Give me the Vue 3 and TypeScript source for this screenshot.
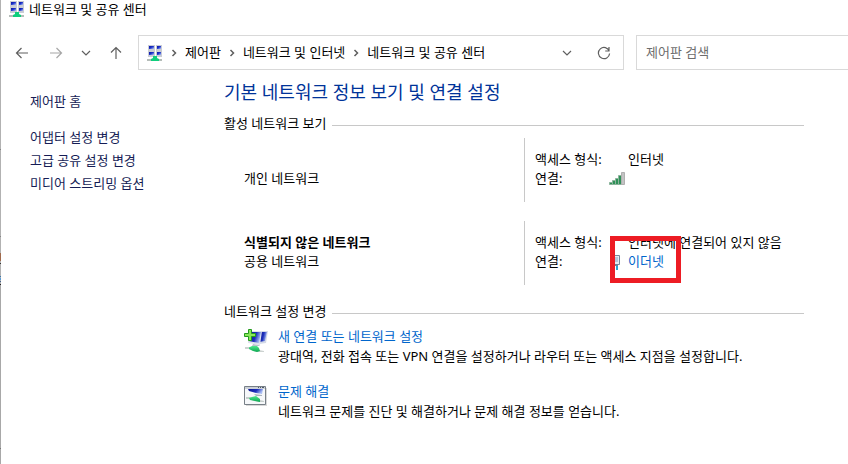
<script setup lang="ts">
interface Network {
  name: string
  type: string
  access: string
  link: string
  highlighted: boolean
}

const crumbs: string[] = ['제어판', '네트워크 및 인터넷', '네트워크 및 공유 센터']
const sideLinks: string[] = ['어댑터 설정 변경', '고급 공유 설정 변경', '미디어 스트리밍 옵션']

const networks: Network[] = [
  { name: '', type: '개인 네트워크', access: '인터넷', link: '', highlighted: false },
  {
    name: '식별되지 않은 네트워크',
    type: '공용 네트워크',
    access: '인터넷에 연결되어 있지 않음',
    link: '이더넷',
    highlighted: true,
  },
]
</script>

<template>
  <div class="window">
    <svg class="defs" width="0" height="0" aria-hidden="true">
      <defs>
        <linearGradient id="screen" x1="0" y1="0" x2="1" y2="1">
          <stop offset="0" stop-color="#0a12a0" />
          <stop offset="0.45" stop-color="#1b30c8" />
          <stop offset="1" stop-color="#b9cdf8" />
        </linearGradient>
        <linearGradient id="display" x1="0" y1="0" x2="1" y2="0.3">
          <stop offset="0" stop-color="#0c1590" />
          <stop offset="0.6" stop-color="#1c2fbb" />
          <stop offset="1" stop-color="#a9bdf4" />
        </linearGradient>
        <linearGradient id="plug" x1="0" y1="0" x2="0" y2="1">
          <stop offset="0" stop-color="#4fe88c" />
          <stop offset="1" stop-color="#0ba651" />
        </linearGradient>
        <symbol id="net" viewBox="0 0 16 16">
          <g fill="#c9ccd4">
            <rect x="1" y="0" width="7" height="6" />
            <rect x="9" y="0" width="6" height="6" />
            <rect x="1" y="6" width="7" height="6" />
            <rect x="9" y="6" width="6" height="6" />
          </g>
          <g fill="url(#screen)">
            <rect x="2" y="1" width="5" height="3" />
            <rect x="10" y="1" width="4" height="3" />
            <rect x="2" y="7" width="5" height="3" />
            <rect x="10" y="7" width="4" height="3" />
          </g>
          <path d="M0 14h15v2H0z" fill="#b4bcb8" />
          <path d="M6 11h4v2l2 1v2H4v-2l2-1z" fill="#0fce7c" />
        </symbol>
      </defs>
    </svg>

    <header class="titlebar">
      <svg class="icon16" aria-hidden="true"><use href="#net" /></svg>
      <span>네트워크 및 공유 센터</span>
    </header>

    <div class="toolbar">
      <nav class="history">
        <button type="button" aria-label="뒤로">
          <svg width="14" height="14" viewBox="0 0 14 14"><path d="M13 7H1.500M6.500 2L1.500 7l5 5" /></svg>
        </button>
        <button type="button" class="off" aria-label="앞으로">
          <svg width="14" height="14" viewBox="0 0 14 14"><path d="M1 7h11.500M7.500 2l5 5-5 5" /></svg>
        </button>
        <button type="button" class="small" aria-label="최근 위치">
          <svg width="10" height="10" viewBox="0 0 10 10"><path d="M1 3l4 4 4-4" /></svg>
        </button>
        <button type="button" aria-label="위로">
          <svg width="14" height="14" viewBox="0 0 14 14"><path d="M7 13V1.500M2 6.500l5-5 5 5" /></svg>
        </button>
      </nav>

      <div class="address">
        <svg class="icon16" aria-hidden="true"><use href="#net" /></svg>
        <template v-for="crumb in crumbs" :key="crumb">
          <svg class="sep" width="6" height="8" viewBox="0 0 6 8" aria-hidden="true"><path d="M1.500 1l3 3-3 3" /></svg>
          <a href="#">{{ crumb }}</a>
        </template>
        <span class="spacer"></span>
        <button type="button" aria-label="이전 위치">
          <svg width="10" height="10" viewBox="0 0 10 10"><path d="M1 3l4 4 4-4" /></svg>
        </button>
        <button type="button" aria-label="새로 고침">
          <svg width="14" height="14" viewBox="0 0 14 14"><path d="M12.300 5.200A5.600 5.600 0 1 0 12.600 7.500M12 1v4H8.200" /></svg>
        </button>
      </div>

      <input class="search" type="search" placeholder="제어판 검색" aria-label="제어판 검색" />
    </div>

    <div class="body">
      <aside class="side">
        <a class="home" href="#">제어판 홈</a>
        <a v-for="item in sideLinks" :key="item" href="#">{{ item }}</a>
      </aside>

      <main class="main">
        <h1>기본 네트워크 정보 보기 및 연결 설정</h1>

        <h2>활성 네트워크 보기</h2>
        <section v-for="net in networks" :key="net.type" class="network">
          <div class="identity">
            <strong v-if="net.name">{{ net.name }}</strong>
            <span>{{ net.type }}</span>
          </div>
          <dl class="details">
            <dt>액세스 형식:</dt>
            <dd class="value">{{ net.access }}</dd>
            <dt>연결:</dt>
            <dd class="connection">
              <svg v-if="net.highlighted" class="icon16" viewBox="0 0 16 16" aria-hidden="true">
                <path d="M3.500 1.500h7v9h-7z" fill="#e4ebf2" stroke="#75899d" />
                <path d="M5 3h4v5H5z" fill="#b5c7da" />
                <path d="M5 10h4v2H5z" fill="#6d8298" />
                <path d="M7 12h2v4H7z" fill="#27a5d2" />
              </svg>
              <svg v-else class="icon16" viewBox="0 0 16 16" aria-hidden="true">
                <g fill="#2f9158" stroke="#8db49c">
                  <path d="M.5 11.500h3v2h-3z" />
                  <path d="M3.500 9.500h3v4h-3z" />
                  <path d="M6.500 7.500h3v6h-3z" />
                  <path d="M9.500 4.500h3v9h-3z" />
                  <path d="M12.500 1.500h3v12h-3z" fill="#c3c3c3" stroke="#b0b0b0" />
                </g>
              </svg>
              <a v-if="net.link" href="#">{{ net.link }}</a>
            </dd>
          </dl>
          <span v-if="net.highlighted" class="marker"></span>
        </section>

        <h2 class="change">네트워크 설정 변경</h2>
        <section class="task">
          <svg width="24" height="24" viewBox="0 0 24 24" aria-hidden="true">
            <path d="M14 2l10 0-2 12-7 1z" fill="#d3d9e6" />
            <path d="M15 3l8 0-2 9-6 1z" fill="url(#display)" />
            <path d="M4 2l14 0-2 14-12-2z" fill="#dde2ec" />
            <path d="M5 3l12 0-2 11-10-2z" fill="url(#display)" />
            <path d="M9 15l6 1 1 1H8z" fill="#bac2cc" />
            <path d="M1 18h5l3 1 6 2 5 1v1l-5 0-5-1-4-2H1z" fill="#ccd2d0" />
            <path d="M5 18.500l3-1.500h5l2 2 1 3-3 1-4-1-4-2z" fill="url(#plug)" />
            <path d="M4.500.5h3v4h4v3h-4v4h-3v-4h-4v-3h4z" fill="#8ae85a" stroke="#249b1e" />
          </svg>
          <div>
            <a href="#">새 연결 또는 네트워크 설정</a>
            <p>광대역, 전화 접속 또는 VPN 연결을 설정하거나 라우터 또는 액세스 지점을 설정합니다.</p>
          </div>
        </section>
        <section class="task">
          <svg width="24" height="24" viewBox="0 0 24 24" aria-hidden="true">
            <path d="M2 4h21v18H2z" fill="#d9d9d9" />
            <path d="M.5 2.500h21v18H.5z" fill="#f6f8fa" stroke="#777f87" />
            <path d="M1 3h20v2H1z" fill="#cbd0d7" />
            <path d="M14 3h1v1h-1zM16 3h1v1h-1zM18 3h2v1h-2z" fill="#4d5866" />
            <path d="M4 5h15l-1 5-6-1-7-2z" fill="url(#display)" />
            <path d="M10 10l8 1 0 1-6 0z" fill="#aab3c0" />
            <path d="M2 13h4l4 2 6 1 4 1v1h-5l-5-1-4-2H2z" fill="#c6cecb" />
            <path d="M5 14l3-1 4-1 4 3 0 3-5-1-5-1z" fill="url(#plug)" />
          </svg>
          <div>
            <a href="#">문제 해결</a>
            <p>네트워크 문제를 진단 및 해결하거나 문제 해결 정보를 얻습니다.</p>
          </div>
        </section>
      </main>
    </div>
  </div>
</template>

<style>
body {
  margin: 0;
  background: #fff;
}
</style>

<style scoped>
.window {
  box-sizing: border-box;
  min-height: 100vh;
  overflow: hidden;
  padding-left: 1px;
  color: #000;
  font: 13px/20px 'Noto Sans', 'Noto Sans CJK KR', sans-serif;
  background:
    linear-gradient(
        #b2b2b2 149px, #858585 149px 150px, #b2b2b2 150px 236px, #858585 236px 237px, #b2b2b2 237px 253px,
        #a06a4c 253px 261px, #b2b2b2 261px 263px, #333 263px 264px, #b2b2b2 264px 276px, #3b76ad 276px 277px,
        #b2b2b2 277px 278px, #5a9bd5 278px 280px, #b2b2b2 280px 281px, #44618c 281px 282px, #b2b2b2 282px 284px,
        #222 284px 285px, #a8a8a8 285px 448px, #777 448px 449px, #a8a8a8 449px
      )
      left top / 1px 100% no-repeat,
    #fff;
}
.defs {
  display: block;
}
a {
  color: inherit;
  text-decoration: none;
}
button {
  display: grid;
  place-items: center;
  padding: 0;
  border: 0;
  background: none;
}
button svg,
.sep {
  fill: none;
  stroke: #5f5f5f;
  stroke-width: 1.2;
}
.icon16 {
  flex: none;
  width: 16px;
  height: 16px;
}
.titlebar {
  display: flex;
  align-items: center;
  gap: 4px;
  height: 18px;
  padding-left: 8px;
}
.toolbar {
  display: flex;
  align-items: stretch;
  height: 35px;
  margin-top: 17px;
}
.history {
  display: flex;
  align-items: center;
  gap: 16px;
  width: 137px;
  box-sizing: border-box;
  padding-left: 12px;
}
.history button {
  width: 18px;
  height: 24px;
}
.history .small {
  width: 10px;
}
.off {
  opacity: 0.55;
}
.address {
  display: flex;
  flex: 0 1 486px;
  box-sizing: border-box;
  align-items: center;
  padding: 0 12px 0 8px;
  border: 1px solid #d9d9d9;
  white-space: nowrap;
}
.address a {
  padding-bottom: 2px;
}
.address .sep {
  flex: none;
  margin: 0 8px;
  stroke-width: 1.5;
}
.address .spacer {
  flex: 1;
}
.address button {
  width: 14px;
  height: 24px;
}
.address button + button {
  margin-left: 23px;
}
.search {
  flex: 1 0 212px;
  box-sizing: border-box;
  min-width: 0;
  margin: 0 -1px 0 12px;
  padding: 0 9px 2px;
  border: 1px solid #d9d9d9;
  border-radius: 0;
  outline: 0;
  background: #fff;
  font: inherit;
  appearance: none;
}
.search::placeholder {
  color: #6d6d6d;
  opacity: 1;
}
.body {
  display: grid;
  grid-template-columns: 223px minmax(0, 580px);
  padding: 8px 44px 0 0;
}
.side {
  display: flex;
  flex-direction: column;
  gap: 3px;
  padding: 13px 0 0 29px;
  color: #151c55;
}
.side .home {
  margin-bottom: 13px;
}
h1 {
  margin: 0 0 7px;
  color: #003399;
  font-size: 18px;
  font-weight: 400;
  line-height: 28px;
}
h2 {
  display: flex;
  align-items: center;
  gap: 6px;
  margin: 0 0 5px;
  font-size: 13px;
  font-weight: 400;
}
h2::after {
  content: '';
  flex: 1;
  height: 1px;
  margin-top: 4px;
  background: #c8c8c8;
}
.network {
  position: relative;
  display: grid;
  grid-template-columns: 300px 1fr;
  height: 64px;
  line-height: 19px;
}
.network + .network {
  margin-top: 19px;
}
.identity {
  display: flex;
  flex-direction: column;
  justify-content: flex-end;
  padding: 0 0 14px 20px;
}
.details {
  display: grid;
  grid-template-columns: 74px 1fr;
  grid-template-rows: 19px 19px;
  margin: 0;
  padding: 12px 0 0 10px;
  border-left: 1px solid #c8c8c8;
}
.details dd {
  margin: 0;
  white-space: nowrap;
}
.value {
  padding-left: 19px;
}
.connection {
  display: flex;
  align-items: center;
  gap: 3px;
}
.connection a,
.task a {
  color: #0066cc;
}
.marker {
  position: absolute;
  top: 15px;
  left: 386px;
  width: 61px;
  height: 37px;
  border: 5px solid #ed1c24;
}
.change {
  margin-top: 16px;
}
.task {
  display: flex;
  gap: 10px;
  padding-left: 20px;
}
.task + .task {
  margin-top: 15px;
}
.task svg {
  flex: none;
  margin-top: 3px;
}
.task p {
  margin: 0;
}
</style>
